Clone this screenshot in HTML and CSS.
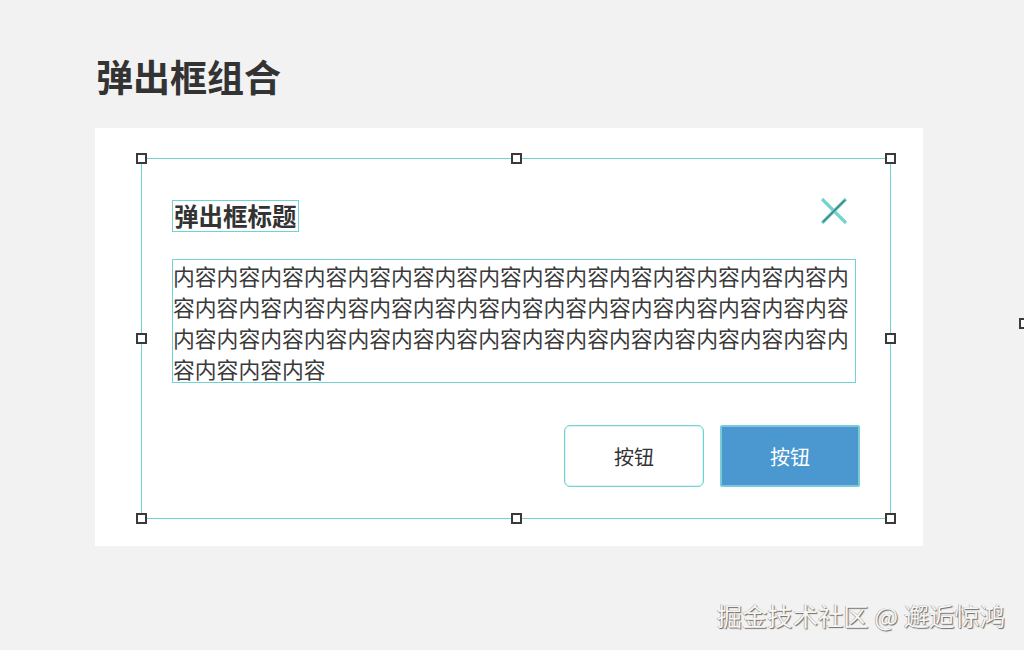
FILE: index.html
```html
<!DOCTYPE html>
<html lang="zh-CN">
<head>
    <meta charset="UTF-8">
    <meta name="viewport" content="width=device-width, initial-scale=1.0">
    <title>弹出框组合</title>
    <link rel="stylesheet" href="styles.css">
</head>
<body>
    <h1 class="page-title">弹出框组合</h1>

    <div class="board">
        <div class="frame">
            <!-- handles of the selected group -->
            <span class="handle h-tl"></span>
            <span class="handle h-tc"></span>
            <span class="handle h-tr"></span>
            <span class="handle h-ml"></span>
            <span class="handle h-mr"></span>
            <span class="handle h-bl"></span>
            <span class="handle h-bc"></span>
            <span class="handle h-br"></span>

            <div class="dialog-head">
                <h2 class="dialog-title">弹出框标题</h2>
                <svg class="close" width="28" height="28" viewBox="0 0 28 28">
                    <line x1="2" y1="2" x2="26" y2="26" stroke="#74d3cb" stroke-width="3.2"/>
                    <line x1="2" y1="26" x2="26" y2="2" stroke="#74d3cb" stroke-width="3.2"/>
                    <line x1="3" y1="25" x2="25" y2="3" stroke="#44807d" stroke-width="1.7"/>
                </svg>
            </div>

            <p class="dialog-body">内容内容内容内容内容内容内容内容内容内容内容内容内容内容内容内容内容内容内容内容内容内容内容内容内容内容内容内容内容内容内容内容内容内容内容内容内容内容内容内容内容内容内容内容内容内容内容内容内容内容</p>

            <div class="dialog-foot">
                <button class="btn">按钮</button>
                <button class="btn btn-primary">按钮</button>
            </div>
        </div>
    </div>

    <span class="handle h-edge"></span>
    <div class="watermark">掘金技术社区 @ 邂逅惊鸿</div>
</body>
</html>
```

FILE: styles.css
```css
body {
    margin: 0;
    background-color: #f2f2f2;
    font-family: "Noto Sans CJK SC", "Noto Sans", sans-serif;
    color: #333;
    height: 650px;
    overflow: hidden;
    position: relative;
}
.page-title {
    margin: 0;
    padding: 56px 0 0 96px;
    font-size: 37px;
    line-height: 40px;
    font-weight: 700;
    color: #333;
}
.board {
    margin: 32px 0 0 95px;
    width: 828px;
    height: 418px;
    background-color: #fff;
    padding: 30px 0 0 46px;
    box-sizing: border-box;
}
.frame {
    position: relative;
    width: 750px;
    height: 361px;
    border: 1px solid #70d2d2;
    box-sizing: border-box;
    padding: 41px 30px 0 30px;
}
.handle {
    position: absolute;
    width: 11px;
    height: 11px;
    border: 2px solid #3a3a3a;
    background-color: #fff;
    box-sizing: border-box;
}
.h-tl { left: -6px; top: -6px; }
.h-tc { left: 369px; top: -6px; }
.h-tr { right: -6px; top: -6px; }
.h-ml { left: -6px; top: 174px; }
.h-mr { right: -6px; top: 174px; }
.h-bl { left: -6px; bottom: -6px; }
.h-bc { left: 369px; bottom: -6px; }
.h-br { right: -6px; bottom: -6px; }
.h-edge {
    left: 1019px;
    top: 318px;
}
.dialog-head {
    display: flex;
    justify-content: space-between;
    align-items: flex-start;
}
.dialog-title {
    margin: 0;
    height: 32px;
    padding: 0 1px;
    border: 1px solid #70d2d2;
    box-sizing: border-box;
    font-size: 24.5px;
    line-height: 29px;
    font-weight: 700;
    color: #333;
}
.close {
    margin: -3px 12px 0 0;
}
.dialog-body {
    margin: 27px 0 0 0;
    width: 684px;
    height: 124px;
    border: 1px solid #70d2d2;
    box-sizing: border-box;
    font-size: 21.8px;
    line-height: 31px;
    color: #3a3a3a;
    padding: 0;
}
.dialog-foot {
    display: flex;
    justify-content: flex-end;
    gap: 16px;
    margin-top: 42px;
}
.btn {
    width: 140px;
    height: 62px;
    border: 1px solid #70d2d2;
    border-radius: 6px;
    background-color: #fff;
    font-family: "Noto Sans CJK SC", sans-serif;
    font-size: 20px;
    color: #333;
    box-shadow: inset 0 0 0 0.5px #bfe9e9;
}
.btn-primary {
    background-color: #4a98cf;
    color: #fff;
    border-radius: 2px;
}
.watermark {
    position: absolute;
    right: 19px;
    top: 598px;
    font-size: 25.3px;
    line-height: 34px;
    color: #f6f6f6;
    text-shadow: 1px 1px 1px #6a6a6a, -0.5px -0.5px 0 #9a9a9a;
}
```
